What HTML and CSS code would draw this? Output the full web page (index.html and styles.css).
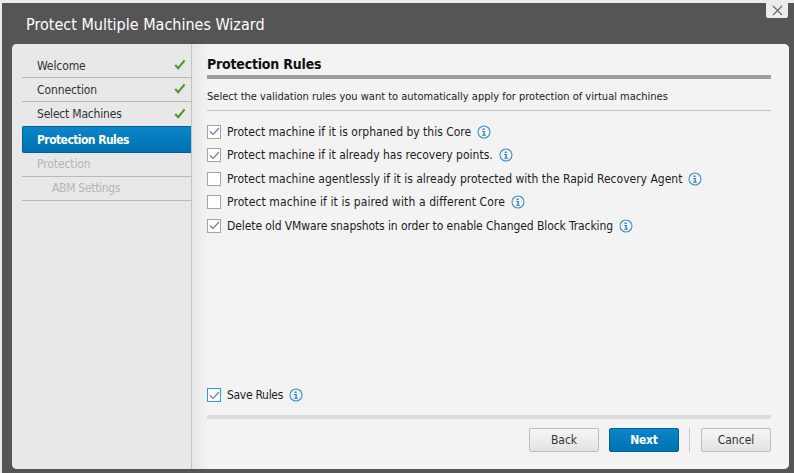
FILE: index.html
```html
<!DOCTYPE html>
<html lang="en">
<head>
<meta charset="utf-8">
<title>Protect Multiple Machines Wizard</title>
<link rel="stylesheet" href="styles.css">
</head>
<body>
<div class="window">
  <button class="close" aria-label="Close"><svg width="11" height="11" viewBox="0 0 11 11"><path d="M1 1l9 9M10 1l-9 9" stroke="#666" stroke-width="1.1" fill="none"/></svg></button>
  <h1 class="title">Protect Multiple Machines Wizard</h1>
  <div class="panel">
    <nav class="side">
      <div class="step done"><span>Welcome</span><svg class="tick" width="12" height="11" viewBox="0 0 12 11"><path d="M1.2 6l3 3.2L10.600 1.400" stroke="#4f9a2c" stroke-width="2.2" fill="none"/></svg></div>
      <div class="step done"><span>Connection</span><svg class="tick" width="12" height="11" viewBox="0 0 12 11"><path d="M1.2 6l3 3.2L10.600 1.400" stroke="#4f9a2c" stroke-width="2.2" fill="none"/></svg></div>
      <div class="step done last-done"><span class="tight">Select Machines</span><svg class="tick" width="12" height="11" viewBox="0 0 12 11"><path d="M1.2 6l3 3.2L10.600 1.400" stroke="#4f9a2c" stroke-width="2.2" fill="none"/></svg></div>
      <div class="step active">Protection Rules</div>
      <div class="step off">Protection</div>
      <div class="step off sub"><span class="tighter">ABM Settings</span></div>
    </nav>
    <main class="main">
      <h2 class="heading">Protection Rules</h2>
      <p class="intro">Select the validation rules you want to automatically apply for protection of virtual machines</p>
      <div class="rules">
        <label class="rule"><span class="box"><svg width="11" height="9" viewBox="0 0 11 9"><path d="M1 4.500l3 3L10 1" stroke="#6f78b8" stroke-width="1.2" fill="none"/></svg></span><span>Protect machine if it is orphaned by this Core</span><svg class="info" width="14" height="14" viewBox="0 0 14 14"><circle cx="7" cy="7" r="6" fill="none" stroke="#3d8fc9" stroke-width="1.1"/><path d="M5.600 3.600h2v1.300h-2zM5.200 6h2.600v3.800h1.100v.9H5.200v-.9h1.200V6.900H5.200z" fill="#2f7fbd"/></svg></label>
        <label class="rule"><span class="box"><svg width="11" height="9" viewBox="0 0 11 9"><path d="M1 4.500l3 3L10 1" stroke="#6f78b8" stroke-width="1.2" fill="none"/></svg></span><span>Protect machine if it already has recovery points.</span><svg class="info" width="14" height="14" viewBox="0 0 14 14"><circle cx="7" cy="7" r="6" fill="none" stroke="#3d8fc9" stroke-width="1.1"/><path d="M5.600 3.600h2v1.300h-2zM5.200 6h2.600v3.800h1.100v.9H5.200v-.9h1.200V6.900H5.200z" fill="#2f7fbd"/></svg></label>
        <label class="rule"><span class="box"></span><span>Protect machine agentlessly if it is already protected with the Rapid Recovery Agent</span><svg class="info" width="14" height="14" viewBox="0 0 14 14"><circle cx="7" cy="7" r="6" fill="none" stroke="#3d8fc9" stroke-width="1.1"/><path d="M5.600 3.600h2v1.300h-2zM5.200 6h2.600v3.800h1.100v.9H5.200v-.9h1.200V6.900H5.200z" fill="#2f7fbd"/></svg></label>
        <label class="rule"><span class="box"></span><span class="wider">Protect machine if it is paired with a different Core</span><svg class="info" width="14" height="14" viewBox="0 0 14 14"><circle cx="7" cy="7" r="6" fill="none" stroke="#3d8fc9" stroke-width="1.1"/><path d="M5.600 3.600h2v1.300h-2zM5.200 6h2.600v3.800h1.100v.9H5.200v-.9h1.200V6.900H5.200z" fill="#2f7fbd"/></svg></label>
        <label class="rule"><span class="box"><svg width="11" height="9" viewBox="0 0 11 9"><path d="M1 4.500l3 3L10 1" stroke="#6f78b8" stroke-width="1.2" fill="none"/></svg></span><span class="narrow">Delete old VMware snapshots in order to enable Changed Block Tracking</span><svg class="info" width="14" height="14" viewBox="0 0 14 14"><circle cx="7" cy="7" r="6" fill="none" stroke="#3d8fc9" stroke-width="1.1"/><path d="M5.600 3.600h2v1.300h-2zM5.200 6h2.600v3.800h1.100v.9H5.200v-.9h1.200V6.900H5.200z" fill="#2f7fbd"/></svg></label>
      </div>
      <label class="rule save"><span class="box focus"><svg width="11" height="9" viewBox="0 0 11 9"><path d="M1 4.500l3 3L10 1" stroke="#6f78b8" stroke-width="1.2" fill="none"/></svg></span><span class="tighter">Save Rules</span><svg class="info" width="14" height="14" viewBox="0 0 14 14"><circle cx="7" cy="7" r="6" fill="none" stroke="#3d8fc9" stroke-width="1.1"/><path d="M5.600 3.600h2v1.300h-2zM5.200 6h2.600v3.800h1.100v.9H5.200v-.9h1.200V6.900H5.200z" fill="#2f7fbd"/></svg></label>
      <footer class="actions">
        <button class="btn">Back</button>
        <button class="btn primary">Next</button>
        <span class="divider"></span>
        <button class="btn cancel">Cancel</button>
      </footer>
    </main>
  </div>
</div>
</body>
</html>
```

FILE: styles.css
```css
* { box-sizing: border-box; }
html, body { margin: 0; height: 100%; }
body {
  background: #ececec;
  font-family: "DejaVu Sans Condensed", "DejaVu Sans", sans-serif;
  font-size: 12px;
  color: #1c1c1c;
  overflow: hidden;
  padding: 3px 0 0 2px;
}
.window {
  position: relative;
  width: 792px;
  height: 470px;
  background: #555;
  padding: 0 0 4px 10px;
  display: flex;
  flex-direction: column;
  overflow: hidden;
}
.close {
  position: absolute;
  top: 0;
  right: 6px;
  width: 22px;
  height: 15px;
  padding: 0;
  border: 0;
  border-radius: 0 0 2px 2px;
  background: #ececec;
  display: flex;
  align-items: center;
  justify-content: center;
}
.title {
  margin: 0;
  height: 41px;
  padding: 12px 0 0 14px;
  color: #fff;
  font-size: 16px;
  line-height: 20px;
  font-weight: 400;
}
.panel {
  flex: 1;
  width: 777px;
  display: flex;
  background: #f3f3f3;
  border-radius: 5px;
  overflow: hidden;
}
.side {
  width: 180px;
  flex: none;
  background: #e8e8e8;
  border-right: 1px solid #c4c4c4;
  padding: 10px 0 0 10px;
}
.step {
  height: 24px;
  padding: 0 5px 0 15px;
  display: flex;
  align-items: center;
  justify-content: space-between;
  border-bottom: 1px solid #b9b9b9;
  font-size: 12px;
  letter-spacing: -.1px;
  color: #333;
}
.last-done { border-bottom: 0; }
.tight { letter-spacing: -.2px; }
.tighter { letter-spacing: -.3px; }
.wider { letter-spacing: .1px; }
.narrow { letter-spacing: -.09px; }
.tick { margin-top: -2px; }
.active {
  height: 27px;
  background: linear-gradient(#0a86c8, #0071b2);
  border: 1px solid #00608f;
  border-right: 0;
  padding-left: 14px;
  color: #fff;
  font-weight: 700;
  letter-spacing: -.55px;
  border-radius: 2px 0 0 2px;
}
.off { color: #b5b5b5; padding-bottom: 2px; }
.sub { padding-left: 30px; }
.main {
  flex: 1;
  padding: 0 18px 17px 15px;
  display: flex;
  flex-direction: column;
  background: linear-gradient(90deg, #e6e6e6, #f3f3f3 16px);
}
.heading {
  margin: 0;
  height: 35px;
  padding-top: 11px;
  font-size: 14px;
  line-height: 18px;
  font-weight: 700;
  letter-spacing: -.2px;
  color: #111;
  border-bottom: 4px solid #9f9f9f;
}
.intro {
  margin: 0;
  height: 32px;
  padding-top: 11px;
  font-size: 11px;
  line-height: 14px;
  border-bottom: 1px solid #c4c4c4;
  color: #222;
}
.rules { padding-top: 9.2px; flex: 1; }
.rule {
  display: flex;
  align-items: center;
  height: 23.5px;
  font-size: 12px;
  color: #1c1c1c;
}
.box {
  width: 14px;
  height: 14px;
  flex: none;
  margin-right: 6px;
  border: 1px solid #a3a3a3;
  background: #fff;
  display: flex;
  align-items: center;
  justify-content: center;
}
.focus { border-color: #1da5d8; }
.info { margin-left: 6px; flex: none; }
.save { height: 24px; margin-bottom: 8px; }
.actions {
  border-top: 4px solid #dcdcdc;
  padding-top: 9px;
  display: flex;
  justify-content: flex-end;
  align-items: center;
}
.btn {
  width: 70px;
  height: 24px;
  padding: 0;
  font: inherit;
  font-size: 12px;
  color: #333;
  border: 1px solid #bdbdbd;
  border-radius: 2px;
  background: linear-gradient(#f6f6f6, #e3e3e3);
  margin-left: 10px;
}
.primary {
  background: linear-gradient(#0a86c8, #0071b2);
  border-color: #00608f;
  color: #fff;
  font-weight: 700;
  letter-spacing: -.3px;
}
.divider {
  width: 1px;
  height: 24px;
  background: #c9c9c9;
  margin-left: 10px;
}
.cancel { margin-left: 11px; }
```
